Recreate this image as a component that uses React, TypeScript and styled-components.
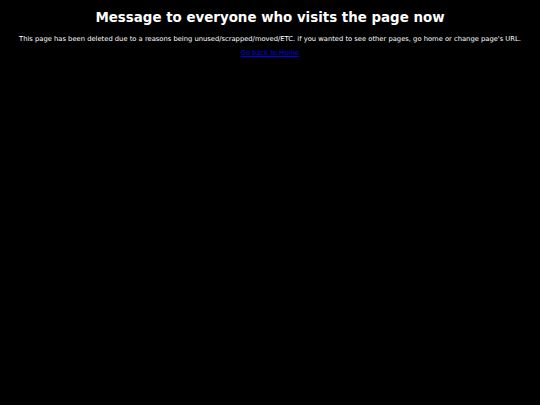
import React from "react";
import styled, { createGlobalStyle } from "styled-components";

const Global = createGlobalStyle`
  html, body { margin: 0; padding: 0; background: #000; }
  body {
    font-family: "DejaVu Sans", Verdana, sans-serif;
    color: #fff;
    -webkit-font-smoothing: antialiased;
  }
`;

const Page = styled.main`
  display: flex;
  flex-direction: column;
  align-items: center;
  padding-top: 10px;
  text-align: center;
`;

const Title = styled.h1`
  margin: 0;
  font-size: 13.4px;
  font-weight: bold;
  line-height: 16px;
  color: #fff;
`;

const Text = styled.p`
  margin: 8px 0 0;
  font-size: 6.75px;
  line-height: 10px;
  color: #fff;
  white-space: nowrap;
`;

const HomeLink = styled.a`
  margin-top: 4px;
  font-size: 6.75px;
  line-height: 10px;
  color: #0000ee;
  text-decoration: underline;
`;

export default function App() {
  return (
    <>
      <Global />
      <Page>
        <Title>Message to everyone who visits the page now</Title>
        <Text>
          This page has been deleted due to a reasons being unused/scrapped/moved/ETC. if you wanted to see other pages, go home or change page's URL.
        </Text>
        <HomeLink href="#">Go back to Home</HomeLink>
      </Page>
    </>
  );
}
